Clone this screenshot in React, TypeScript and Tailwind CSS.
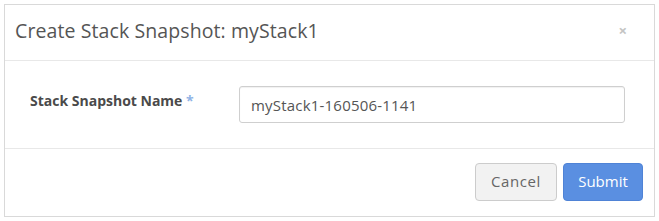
import React from 'react';

export default function App() {
    return (
        <div className="w-[659px] h-[221px] bg-white p-[4px] font-['Open_Sans',sans-serif]">
            <div className="w-[651px] h-[213px] border border-[#d9d9d9] flex flex-col">
                <div className="h-[56px] flex items-center justify-between pl-[10px] pr-[27px] border-b border-[#e8e8e8] pb-[4px]">
                    <h4 className="text-[19.5px] text-[#555] tracking-[0.1px]">Create Stack Snapshot: myStack1</h4>
                    <span className="text-[15px] leading-none text-[#c4c4c4] font-bold">×</span>
                </div>
                <div className="h-[88px] flex items-center border-b border-[#e8e8e8]">
                    <label className="w-[234px] pl-[25px] text-[14px] font-bold text-[#4a4a4a] -mt-[8px]">
                        Stack Snapshot Name <span className="text-[#8fb3e6]">*</span>
                    </label>
                    <input
                        className="w-[386px] h-[37px] border border-[#cfcfcf] rounded-[3px] px-[11px] text-[15px] text-[#555] tracking-[0.2px] shadow-[inset_0_1px_1px_rgba(0,0,0,0.06)] outline-none"
                        defaultValue="myStack1-160506-1141"
                    />
                </div>
                <div className="flex-1 flex items-center justify-end gap-[6px] pr-[11px] -mt-[2px]">
                    <button className="w-[82px] h-[38px] rounded-[4px] border border-[#cccccc] bg-[#f2f2f2] text-[15px] tracking-[0.6px] text-[#666]">Cancel</button>
                    <button className="w-[80px] h-[38px] rounded-[4px] border border-[#4f83d6] bg-[#5a8fe1] text-[15px] text-white">Submit</button>
                </div>
            </div>
        </div>
    );
}
